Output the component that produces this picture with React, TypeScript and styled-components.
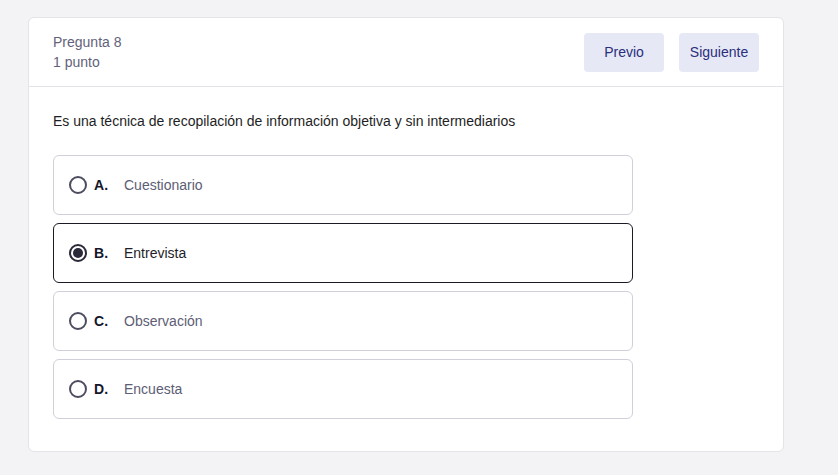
import React, { useState } from "react";
import styled, { createGlobalStyle } from "styled-components";

const Global = createGlobalStyle`
  html, body { margin: 0; padding: 0; background: #f3f3f5; }
  body { font-family: "Liberation Sans", Arial, sans-serif; }
`;

const Page = styled.div`
  padding: 17px 54px 24px 28px;
`;

const Card = styled.div`
  background: #fff;
  border: 1px solid #e3e3e8;
  border-radius: 6px;
  width: 754px;
`;

const Header = styled.div`
  display: flex;
  justify-content: space-between;
  align-items: center;
  padding: 14px 24px 14px 24px;
  border-bottom: 1px solid #e3e3e8;
`;

const Meta = styled.div`
  display: flex;
  flex-direction: column;
  font-size: 14px;
  line-height: 20px;
  color: #62627a;
`;

const Buttons = styled.div`
  display: flex;
  gap: 15px;
`;

const NavButton = styled.button`
  height: 39px;
  width: 80px;
  border: none;
  border-radius: 4px;
  background: #e6e8f5;
  color: #2a2e7c;
  font-family: inherit;
  font-size: 14px;
  cursor: pointer;
`;

const Body = styled.div`
  padding: 24px 24px 32px 24px;
`;

const Question = styled.p`
  margin: 0 0 24px;
  font-size: 14px;
  line-height: 20px;
  color: #1e1e24;
`;

const Options = styled.div`
  display: flex;
  flex-direction: column;
  gap: 8px;
  width: 580px;
`;

const Option = styled.label<{ $selected: boolean }>`
  display: flex;
  align-items: center;
  height: 60px;
  box-sizing: border-box;
  padding: 0 15px;
  border: 1px solid ${(p) => (p.$selected ? "#1b1b26" : "#cfd0da")};
  border-radius: 6px;
  cursor: pointer;
`;

const Radio = styled.span<{ $selected: boolean }>`
  width: 18px;
  height: 18px;
  box-sizing: border-box;
  border-radius: 50%;
  border: 2px solid ${(p) => (p.$selected ? "#2a2a38" : "#4d4d60")};
  display: flex;
  align-items: center;
  justify-content: center;
  &::after {
    content: "";
    width: 10px;
    height: 10px;
    border-radius: 50%;
    background: #2a2a38;
    display: ${(p) => (p.$selected ? "block" : "none")};
  }
`;

const Letter = styled.span`
  font-weight: bold;
  font-size: 14px;
  color: #16162a;
  width: 30px;
  margin-left: 7px;
`;

const Text = styled.span<{ $selected: boolean }>`
  font-size: 14px;
  color: ${(p) => (p.$selected ? "#1e1e28" : "#5d5d74")};
`;

const options = [
  { key: "A", text: "Cuestionario" },
  { key: "B", text: "Entrevista" },
  { key: "C", text: "Observación" },
  { key: "D", text: "Encuesta" },
];

export default function App() {
  const [sel, setSel] = useState("B");
  return (
    <Page>
      <Global />
      <Card>
        <Header>
          <Meta>
            <span>Pregunta 8</span>
            <span>1 punto</span>
          </Meta>
          <Buttons>
            <NavButton>Previo</NavButton>
            <NavButton>Siguiente</NavButton>
          </Buttons>
        </Header>
        <Body>
          <Question>
            Es una técnica de recopilación de información objetiva y sin intermediarios
          </Question>
          <Options>
            {options.map((o) => (
              <Option key={o.key} $selected={sel === o.key} onClick={() => setSel(o.key)}>
                <Radio $selected={sel === o.key} />
                <Letter>{o.key}.</Letter>
                <Text $selected={sel === o.key}>{o.text}</Text>
              </Option>
            ))}
          </Options>
        </Body>
      </Card>
    </Page>
  );
}
